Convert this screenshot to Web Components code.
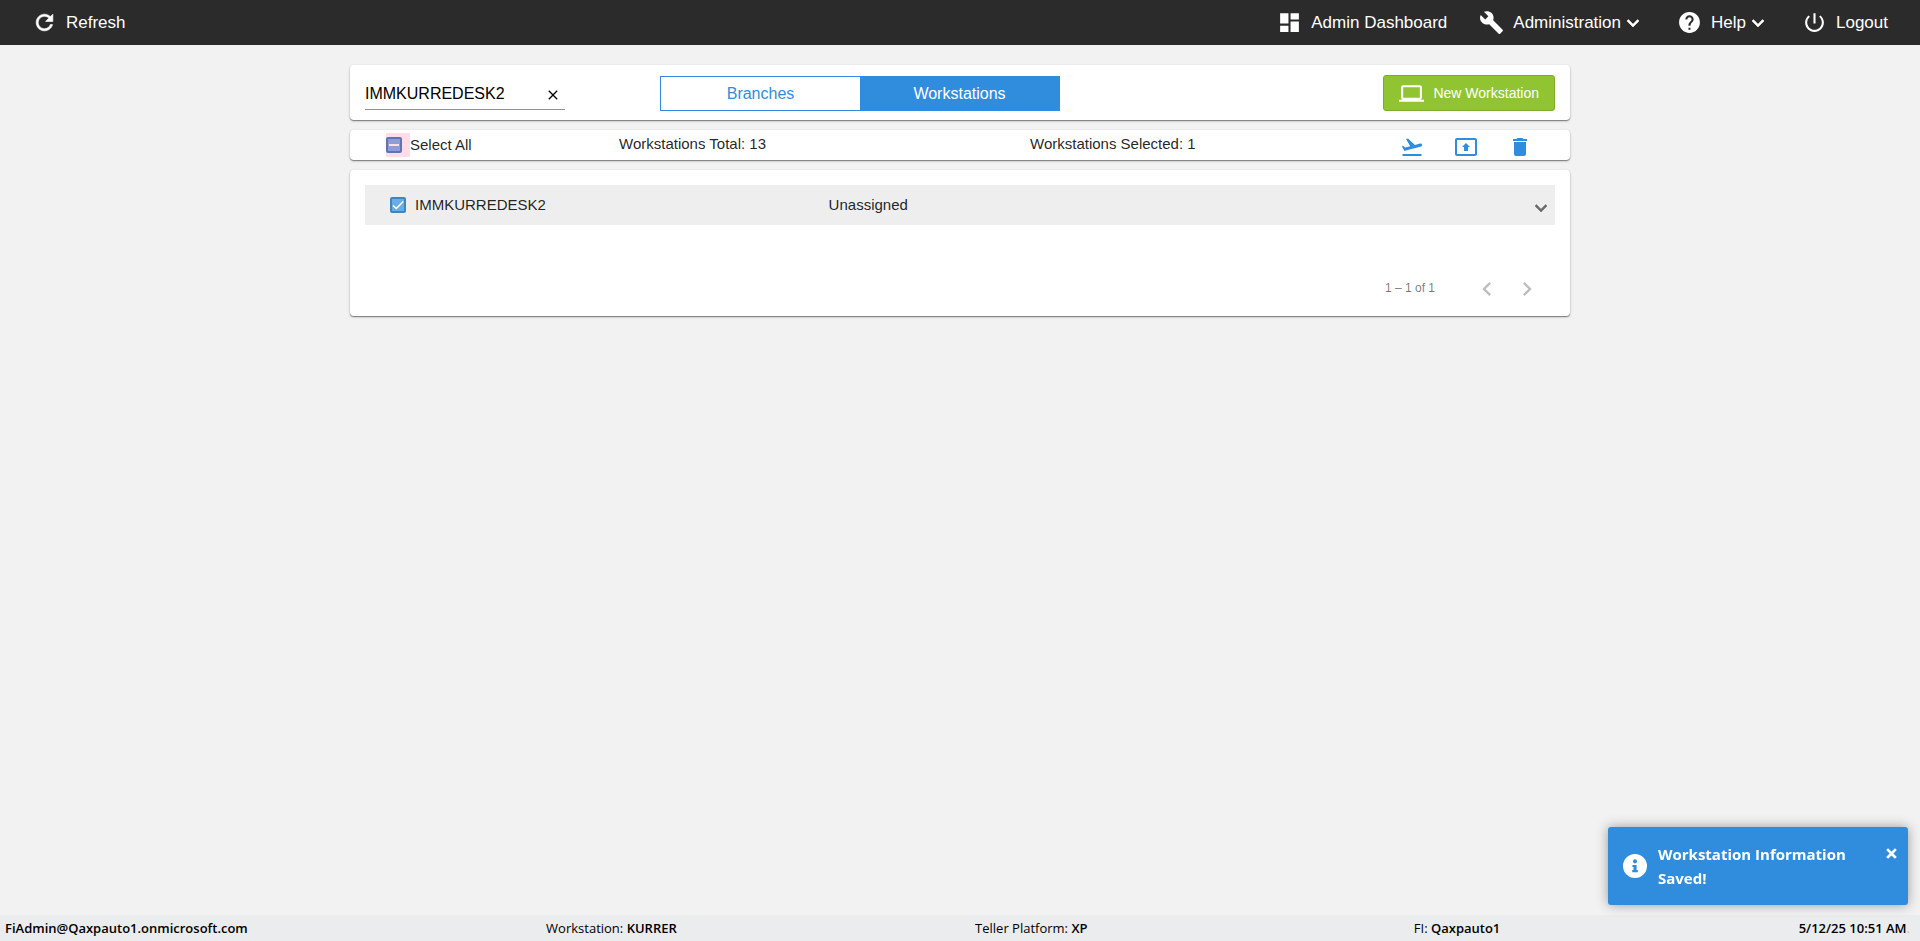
<!DOCTYPE html>
<html lang="en">
<head>
<meta charset="utf-8">
<title>Workstations</title>
<style>
    :root {
        --blue: #308ddd;
        --bar: #2b2b2b;
        --page: #f2f2f2;
        --text: rgb(0 0 0 / .87);
        --sans: 'Liberation Sans', Arial, sans-serif;
        --segoe: 'Open Sans', 'Noto Sans', sans-serif;
    }
    body {
        margin: 0;
        background: var(--page);
        color: var(--text);
        font: 15px/20px var(--sans);
    }
</style>
</head>
<body>
<admin-app></admin-app>

<script>
const icons = {
    refresh: 'M17.65 6.35C16.2 4.9 14.21 4 12 4c-4.42 0-7.99 3.58-7.99 8s3.57 8 7.99 8c3.73 0 6.84-2.55 7.73-6h-2.08c-.82 2.33-3.04 4-5.65 4-3.31 0-6-2.69-6-6s2.69-6 6-6c1.66 0 3.14.69 4.22 1.78L13 11h7V4l-2.35 2.35z',
    dashboard: 'M3 13h8V3H3v10zm0 8h8v-6H3v6zm10 0h8V11h-8v10zm0-18v6h8V3h-8z',
    build: 'M22.7 19l-9.1-9.1c.9-2.3.4-5-1.5-6.9-2-2-5-2.4-7.4-1.3L9 6 6 9 1.6 4.7C.4 7.1.9 10.1 2.9 12.1c1.9 1.9 4.6 2.4 6.9 1.5l9.1 9.1c.4.4 1 .4 1.4 0l2.3-2.3c.5-.4.5-1.1.1-1.4z',
    help: 'M12 2C6.48 2 2 6.48 2 12s4.48 10 10 10 10-4.48 10-10S17.52 2 12 2zm1 17h-2v-2h2v2zm2.07-7.75l-.9.92C13.45 12.9 13 13.5 13 15h-2v-.5c0-1.1.45-2.1 1.17-2.83l1.24-1.26c.37-.36.59-.86.59-1.41 0-1.1-.9-2-2-2s-2 .9-2 2H8c0-2.21 1.79-4 4-4s4 1.79 4 4c0 .88-.36 1.68-.93 2.25z',
    power: 'M13 3h-2v10h2V3zm4.83 2.17l-1.42 1.42C17.99 7.86 19 9.81 19 12c0 3.87-3.13 7-7 7s-7-3.13-7-7c0-2.19 1.01-4.14 2.58-5.42L6.17 5.17C4.23 6.82 3 9.26 3 12c0 4.97 4.03 9 9 9s9-4.03 9-9c0-2.74-1.23-5.18-3.17-6.83z',
    expand: 'M16.59 8.59L12 13.17 7.41 8.59 6 10l6 6 6-6z',
    left: 'M15.41 7.41L14 6l-6 6 6 6 1.41-1.41L10.83 12z',
    right: 'M10 6L8.59 7.41 13.17 12l-4.58 4.59L10 18l6-6z',
    close: 'M19 6.41L17.59 5 12 10.59 6.41 5 5 6.41 10.59 12 5 17.59 6.41 19 12 13.41 17.59 19 19 17.59 13.41 12z',
    laptop: 'M20 18c1.1 0 1.99-.9 1.99-2L22 6c0-1.1-.9-2-2-2H4c-1.1 0-2 .9-2 2v10c0 1.1.9 2 2 2H0v2h24v-2h-4zM4 6h16v10H4V6z',
    takeoff: 'M2.5 19h19v2h-19zm19.57-9.36c-.21-.8-1.04-1.28-1.84-1.06L14.92 10l-6.9-6.43-1.93.51 4.14 7.17-4.97 1.33-1.97-1.54-1.45.39 1.82 3.16.77 1.33 1.6-.43 5.31-1.42 4.35-1.16L21 11.49c.81-.23 1.28-1.05 1.07-1.85z',
    present: 'M21 3H3c-1.11 0-2 .89-2 2v14c0 1.11.89 2 2 2h18c1.11 0 2-.89 2-2V5c0-1.11-.89-2-2-2zm0 16.02H3V4.98h18v14.04zM10 12H8l4-4 4 4h-2v4h-4v-4z',
    delete: 'M6 19c0 1.1.9 2 2 2h8c1.1 0 2-.9 2-2V7H6v12zM19 4h-3.5l-1-1h-5l-1 1H5v2h14V4z',
    info: 'M12 0a12 12 0 1 0 0 24 12 12 0 0 0 0-24zM12 5.3a2 2 0 1 1 0 4.1 2 2 0 0 1 0-4.1zM9.4 10.9h4.2v5.2h1.2v2.2H9.2v-2.2h1.3v-3H9.4z',
    times: 'M6.5 3.5L12 9l5.5-5.5 3 3L15 12l5.5 5.5-3 3L12 15l-5.5 5.5-3-3L9 12 3.5 6.5z'
};

customElements.define(
    'app-icon',
    class extends HTMLElement {
        constructor() {
            super();
            this.attachShadow({ mode: 'open' });
        }

        connectedCallback() {
            this.shadowRoot.innerHTML =
                `<style>
                    :host {
                        display: inline-block;
                        flex: none;
                        width: var(--size, 24px);
                        height: var(--size, 24px);
                    }
                    svg {
                        display: block;
                        width: 100%;
                        height: 100%;
                        fill: currentColor;
                    }
                    :host([name="refresh"]) svg,
                    :host([name="expand"]) svg {
                        stroke: currentColor;
                        stroke-width: .6;
                    }
                </style>
                <svg viewBox="0 0 24 24" aria-hidden="true">
                    <path fill-rule="evenodd" d="${icons[this.getAttribute('name')]}"/>
                </svg>`;
        }
    }
);

customElements.define(
    'nav-link',
    class extends HTMLElement {
        constructor() {
            super();

            this.attachShadow({ mode: 'open' }).innerHTML =
                `<style>
                    :host {
                        display: block;
                    }
                    a {
                        display: flex;
                        align-items: center;
                        color: #fff;
                        font-size: 17px;
                        text-decoration: none;
                        white-space: nowrap;
                    }
                    .icon {
                        --size: 25px;
                        margin-right: 9px;
                    }
                </style>
                <a href="#">
                    <app-icon class="icon" name="${this.getAttribute('icon')}"></app-icon>
                    <slot></slot>
                    ${this.hasAttribute('menu') ? '<app-icon name="expand"></app-icon>' : ''}
                </a>`;
        }
    }
);

customElements.define(
    'top-bar',
    class extends HTMLElement {
        constructor() {
            super();

            this.attachShadow({ mode: 'open' }).innerHTML =
                `<style>
                    :host {
                        display: block;
                        background: var(--bar);
                    }
                    nav {
                        display: flex;
                        align-items: center;
                        gap: 32px;
                        height: 45px;
                        padding: 0 32px;
                    }
                    nav-link:first-child {
                        margin-right: auto;
                    }
                </style>
                <nav>
                    <nav-link icon="refresh">Refresh</nav-link>
                    <nav-link icon="dashboard">Admin Dashboard</nav-link>
                    <nav-link icon="build" menu>Administration</nav-link>
                    <nav-link icon="help" menu>Help</nav-link>
                    <nav-link icon="power">Logout</nav-link>
                </nav>`;
        }
    }
);

customElements.define(
    'app-card',
    class extends HTMLElement {
        constructor() {
            super();

            this.attachShadow({ mode: 'open' }).innerHTML =
                `<style>
                    :host {
                        display: block;
                        background: #fff;
                        border-radius: 4px;
                        box-shadow: 0 1px 1px rgb(0 0 0 / .4), 0 1px 3px rgb(0 0 0 / .2);
                    }
                </style>
                <slot></slot>`;
        }
    }
);

customElements.define(
    'check-field',
    class extends HTMLElement {
        constructor() {
            super();

            const partial = this.hasAttribute('indeterminate');
            this.attachShadow({ mode: 'open' }).innerHTML =
                `<style>
                    :host {
                        display: block;
                    }
                    label {
                        display: flex;
                        align-items: center;
                        gap: 9px;
                    }
                    .box {
                        display: grid;
                        width: 16px;
                        height: 24px;
                        align-items: center;
                    }
                    .box > * {
                        grid-area: 1 / 1;
                    }
                    input {
                        appearance: none;
                        box-sizing: border-box;
                        width: 16px;
                        height: 16px;
                        margin: 0;
                        border: 2px solid #4285bb;
                        border-radius: 2px;
                        background: #6aade6;
                    }
                    svg {
                        width: 16px;
                        height: 16px;
                        fill: none;
                        stroke: #fff;
                        pointer-events: none;
                    }
                    :host([indeterminate]) label {
                        gap: 0;
                    }
                    :host([indeterminate]) .box {
                        width: 24px;
                        background: radial-gradient(circle at 0 50%, #ffdde8 26px, transparent 27px);
                    }
                    :host([indeterminate]) input {
                        border-color: #5f74b4;
                        background: #8c9dd8;
                    }
                    :host([indeterminate]) svg {
                        stroke: #ffdde8;
                    }
                </style>
                <label>
                    <span class="box">
                        <input type="checkbox">
                        <svg viewBox="0 0 16 16">
                            <path d="${partial ? 'M3 8h10' : 'M3 8.5l3.3 3L13.3 4.5'}" stroke-width="${partial ? 2 : 1.5}"/>
                        </svg>
                    </span>
                    <slot></slot>
                </label>`;

            const input = this.shadowRoot.querySelector('input');
            input.indeterminate = partial;
            input.checked = !partial;
        }
    }
);

customElements.define(
    'search-bar',
    class extends HTMLElement {
        constructor() {
            super();

            this.attachShadow({ mode: 'open' }).innerHTML =
                `<style>
                    :host {
                        display: grid;
                        grid-template-columns: 295fr 400fr 495fr;
                        align-items: center;
                        padding: 10px 15px 9px;
                    }
                    button {
                        font: inherit;
                        border: none;
                        margin: 0;
                        padding: 0;
                        cursor: pointer;
                    }
                    .search {
                        display: flex;
                        align-items: center;
                        box-sizing: border-box;
                        width: 200px;
                        height: 34px;
                        border-bottom: 1px solid #949494;
                    }
                    .search input {
                        flex: 1;
                        min-width: 0;
                        padding: 2px 0 0;
                        border: none;
                        outline: none;
                        background: none;
                        color: #000;
                        font: 16px/20px var(--sans);
                    }
                    .search button {
                        --size: 16px;
                        display: flex;
                        padding: 4px 4px 0;
                        color: #000;
                        background: none;
                    }
                    .tabs {
                        display: grid;
                        grid-template-columns: 1fr 1fr;
                        height: 35px;
                        box-sizing: border-box;
                        border: 1px solid var(--blue);
                        font-size: 16px;
                    }
                    .tabs button {
                        padding-top: 2px;
                        color: var(--blue);
                        background: #fff;
                    }
                    .tabs .active {
                        color: #fff;
                        background: var(--blue);
                    }
                    .new {
                        --size: 25px;
                        display: flex;
                        align-items: center;
                        justify-self: end;
                        gap: 9px;
                        box-sizing: border-box;
                        height: 36px;
                        padding: 0 15px;
                        color: #fff;
                        background: #90c531;
                        border: 1px solid #7dab2b;
                        border-radius: 3px;
                        font-size: 14px;
                    }
                </style>
                <div class="search">
                    <input type="text" aria-label="Search" value="IMMKURREDESK2">
                    <button type="button" aria-label="Clear"><app-icon name="close"></app-icon></button>
                </div>
                <div class="tabs">
                    <button type="button">Branches</button>
                    <button type="button" class="active">Workstations</button>
                </div>
                <button type="button" class="new"><app-icon name="laptop"></app-icon>New Workstation</button>`;

            const input = this.shadowRoot.querySelector('input');
            this.shadowRoot.querySelector('.search button').addEventListener('click', () => {
                input.value = '';
                input.focus();
            });
        }
    }
);

customElements.define(
    'selection-bar',
    class extends HTMLElement {
        constructor() {
            super();

            this.attachShadow({ mode: 'open' }).innerHTML =
                `<style>
                    :host {
                        display: grid;
                        grid-template-columns: 233fr 411fr 370fr 170fr;
                        align-items: center;
                        height: 30px;
                        padding-left: 36px;
                    }
                    .count {
                        padding-bottom: 2px;
                    }
                    .actions {
                        display: flex;
                        gap: 30px;
                        padding-top: 4px;
                        color: var(--blue);
                    }
                    button {
                        display: flex;
                        padding: 0;
                        border: none;
                        color: inherit;
                        background: none;
                        cursor: pointer;
                    }
                </style>
                <check-field indeterminate>Select All</check-field>
                <span class="count">Workstations Total: 13</span>
                <span class="count">Workstations Selected: 1</span>
                <div class="actions">
                    <button type="button" aria-label="Unassign"><app-icon name="takeoff"></app-icon></button>
                    <button type="button" aria-label="Assign"><app-icon name="present"></app-icon></button>
                    <button type="button" aria-label="Delete"><app-icon name="delete"></app-icon></button>
                </div>`;
        }
    }
);

customElements.define(
    'workstation-list',
    class extends HTMLElement {
        constructor() {
            super();

            this.attachShadow({ mode: 'open' }).innerHTML =
                `<style>
                    :host {
                        display: block;
                        padding: 15px 15px 8px;
                    }
                    button {
                        display: flex;
                        padding: 0;
                        border: none;
                        color: #6b6b6b;
                        background: none;
                        cursor: pointer;
                    }
                    .row {
                        display: grid;
                        grid-template-columns: 439fr 701fr auto;
                        align-items: center;
                        height: 40px;
                        padding: 0 2px 0 25px;
                        background: #eee;
                    }
                    .row button {
                        padding-top: 5px;
                    }
                    .pages {
                        display: flex;
                        align-items: center;
                        justify-content: flex-end;
                        margin-top: 43px;
                        height: 40px;
                        padding-right: 8px;
                        color: rgb(0 0 0 / .54);
                        font-size: 12px;
                    }
                    .pages span {
                        margin-right: 32px;
                    }
                    .pages button {
                        --size: 28px;
                        padding: 7px 6px 5px;
                        color: #bdbdbd;
                    }
                </style>
                <div class="row">
                    <check-field>IMMKURREDESK2</check-field>
                    <span>Unassigned</span>
                    <button type="button" aria-label="Expand"><app-icon name="expand"></app-icon></button>
                </div>
                <div class="pages">
                    <span>1 – 1 of 1</span>
                    <button type="button" disabled aria-label="Previous page"><app-icon name="left"></app-icon></button>
                    <button type="button" disabled aria-label="Next page"><app-icon name="right"></app-icon></button>
                </div>`;
        }
    }
);

customElements.define(
    'toast-message',
    class extends HTMLElement {
        constructor() {
            super();

            this.attachShadow({ mode: 'open' }).innerHTML =
                `<style>
                    :host {
                        position: fixed;
                        right: 12px;
                        bottom: 36px;
                        display: flex;
                        align-items: flex-start;
                        box-sizing: border-box;
                        width: 300px;
                        padding: 15px 9px 15px 15px;
                        color: #fff;
                        background: var(--blue);
                        border-radius: 3px;
                        box-shadow: 0 0 12px #999;
                        font: 700 15px/24px var(--segoe);
                    }
                    .info {
                        align-self: center;
                        margin-right: 11px;
                    }
                    .text {
                        flex: 1;
                        max-width: 200px;
                    }
                    button {
                        --size: 15px;
                        display: flex;
                        margin-left: auto;
                        padding: 4px 0;
                        border: none;
                        color: inherit;
                        background: none;
                        cursor: pointer;
                    }
                </style>
                <app-icon class="info" name="info"></app-icon>
                <div class="text" role="status"><slot></slot></div>
                <button type="button" aria-label="Close"><app-icon name="times"></app-icon></button>`;

            this.shadowRoot.querySelector('button').addEventListener('click', () => this.remove());
        }
    }
);

customElements.define(
    'status-bar',
    class extends HTMLElement {
        constructor() {
            super();

            this.attachShadow({ mode: 'open' }).innerHTML =
                `<style>
                    :host {
                        display: flex;
                        justify-content: space-between;
                        height: 26px;
                        padding: 0 10px 0 5px;
                        color: #000;
                        background: #ebecee;
                        font: 13px/26px var(--segoe);
                    }
                    b {
                        font-weight: 600;
                    }
                    .fi {
                        margin-left: 28px;
                    }
                    i {
                        color: #bbb;
                        font-style: normal;
                    }
                </style>
                <b>FiAdmin@Qaxpauto1.onmicrosoft.com</b>
                <span>Workstation: <b>KURRER</b></span>
                <span>Teller Platform: <b>XP</b></span>
                <span class="fi">FI: <b>Qaxpauto1</b></span>
                <span><b>5/12/25 10:51 AM</b><i>.</i></span>`;
        }
    }
);

customElements.define(
    'admin-app',
    class extends HTMLElement {
        constructor() {
            super();

            this.attachShadow({ mode: 'open' }).innerHTML =
                `<style>
                    :host {
                        display: flex;
                        flex-direction: column;
                        min-height: 100vh;
                    }
                    main {
                        flex: 1;
                        display: flex;
                        flex-direction: column;
                        gap: 10px;
                        box-sizing: border-box;
                        width: 100%;
                        max-width: 1220px;
                        margin: 20px auto;
                    }
                </style>
                <top-bar></top-bar>
                <main>
                    <app-card><search-bar></search-bar></app-card>
                    <app-card><selection-bar></selection-bar></app-card>
                    <app-card><workstation-list></workstation-list></app-card>
                </main>
                <status-bar></status-bar>
                <toast-message>Workstation Information Saved!</toast-message>`;
        }
    }
);
</script>
</body>
</html>
